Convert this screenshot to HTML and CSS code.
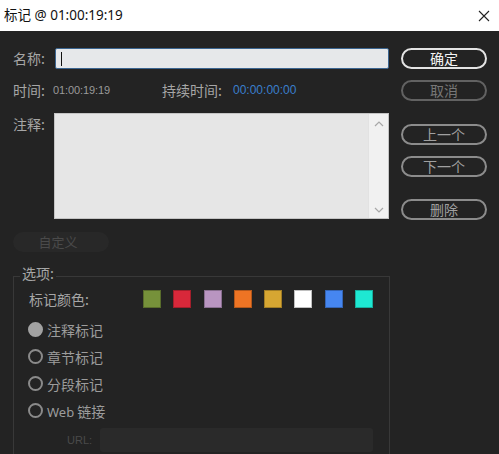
FILE: index.html
```html
<!DOCTYPE html>
<html lang="zh">
<head>
<meta charset="utf-8">
<title>标记</title>
<link rel="stylesheet" href="styles.css">
</head>
<body>
<div class="window">
  <div class="titlebar">
    <span class="title">标记 @ 01:00:19:19</span>
    <svg class="close" width="12" height="12" viewBox="0 0 12 12"><path d="M1 1L11 11M11 1L1 11"/></svg>
  </div>
  <div class="dialog">
    <div class="main">
      <div class="form">
        <div class="row name-row">
          <span class="label">名称:</span>
          <div class="input"><span class="caret"></span></div>
        </div>
        <div class="row time-row">
          <span class="label time-label">时间:</span>
          <span class="time-value">01:00:19:19</span>
          <span class="label dur-label">持续时间:</span>
          <span class="dur-value">00:00:00:00</span>
        </div>
        <div class="row notes-row">
          <span class="label notes-label">注释:</span>
          <div class="textarea">
            <div class="scrollbar">
              <svg class="arrow" width="10" height="6" viewBox="0 0 10 6"><path d="M1 5L5 1L9 5"/></svg>
              <svg class="arrow" width="10" height="6" viewBox="0 0 10 6"><path d="M1 1L5 5L9 1"/></svg>
            </div>
          </div>
        </div>
        <div class="custom-btn">自定义</div>
      </div>
      <div class="buttons">
        <div class="btn btn-ok">确定</div>
        <div class="btn btn-cancel">取消</div>
        <div class="btn btn-nav btn-prev">上一个</div>
        <div class="btn btn-nav btn-next">下一个</div>
        <div class="btn btn-nav btn-del">删除</div>
      </div>
    </div>
    <fieldset class="options">
      <legend class="legend">选项:</legend>
      <div class="color-row">
        <span class="opt-label">标记颜色:</span>
        <div class="swatches">
          <span class="swatch sw-green"></span>
          <span class="swatch sw-red"></span>
          <span class="swatch sw-lilac"></span>
          <span class="swatch sw-orange"></span>
          <span class="swatch sw-gold"></span>
          <span class="swatch sw-white"></span>
          <span class="swatch sw-blue"></span>
          <span class="swatch sw-cyan"></span>
        </div>
      </div>
      <div class="radio-row"><span class="radio checked"></span><span class="radio-text">注释标记</span></div>
      <div class="radio-row"><span class="radio"></span><span class="radio-text">章节标记</span></div>
      <div class="radio-row"><span class="radio"></span><span class="radio-text">分段标记</span></div>
      <div class="radio-row"><span class="radio"></span><span class="radio-text"><span class="latin">Web</span> 链接</span></div>
      <div class="url-row">
        <span class="url-label">URL:</span>
        <div class="url-field"></div>
      </div>
    </fieldset>
  </div>
</div>
</body>
</html>
```

FILE: styles.css
```css
* { box-sizing: border-box; }
html, body {
  margin: 0;
  padding: 0;
  width: 499px;
  height: 454px;
  overflow: hidden;
  background: #232323;
}
body {
  font-family: "Noto Sans CJK SC", "Noto Sans", sans-serif;
}
.window {
  width: 499px;
  height: 454px;
  display: flex;
  flex-direction: column;
  overflow: hidden;
}
.titlebar {
  height: 31px;
  flex: none;
  background: #ffffff;
  display: flex;
  align-items: center;
  justify-content: space-between;
  padding: 0 9px 0 4px;
}
.title {
  font-family: "Noto Sans", "Noto Sans CJK SC", sans-serif;
  font-size: 13.5px;
  color: #111;
  line-height: 20px;
  margin-top: -1px;
}
.close path {
  stroke: #222;
  stroke-width: 1.1;
  fill: none;
}
.dialog {
  flex: 1;
  min-height: 0;
  background: #232323;
  padding: 17px 10px 0 13px;
  overflow: hidden;
}
.main {
  display: flex;
}
.form {
  width: 376px;
  display: flex;
  flex-direction: column;
}
.row {
  display: flex;
}
.label {
  color: #a6a6a6;
  font-size: 14px;
  line-height: 21px;
}
.name-row {
  height: 21px;
  align-items: center;
}
.name-row .label {
  width: 42px;
}
.input {
  flex: 1;
  height: 21px;
  background: #e6e8ea;
  border: 1px solid #3b6590;
  border-radius: 2px;
  display: flex;
  align-items: center;
  padding-left: 5px;
}
.caret {
  width: 1px;
  height: 14px;
  background: #111;
}
.time-row {
  margin-top: 11px;
  height: 20px;
  align-items: center;
}
.time-label {
  width: 40px;
}
.time-value {
  font-family: "Liberation Sans", sans-serif;
  font-size: 11px;
  color: #9a9a9a;
  letter-spacing: -0.1px;
}
.dur-label {
  margin-left: 52px;
  width: 71px;
}
.dur-value {
  font-family: "Liberation Sans", sans-serif;
  font-size: 12px;
  color: #3a7fcc;
}
.notes-row {
  margin-top: 13px;
}
.notes-label {
  width: 41px;
  line-height: 20px;
  padding-top: 1px;
}
.textarea {
  flex: 1;
  height: 106px;
  background: #e6e6e6;
  border: 1px solid #c4c4c4;
  display: flex;
  justify-content: flex-end;
}
.scrollbar {
  width: 20px;
  background: #f1f1f1;
  border-left: 1px solid #e2e2e2;
  display: flex;
  flex-direction: column;
  justify-content: space-between;
  align-items: center;
  padding: 7px 0 5px;
}
.arrow path {
  stroke: #a8a8a8;
  stroke-width: 1.2;
  fill: none;
}
.custom-btn {
  margin-top: 13px;
  width: 96px;
  height: 20px;
  border-radius: 10px;
  background: #282828;
  color: #4a4a4a;
  font-size: 13px;
  line-height: 20px;
  text-align: center;
  padding-right: 6px;
}
.buttons {
  margin-left: 12px;
  width: 86px;
  display: flex;
  flex-direction: column;
}
.btn {
  height: 21px;
  border-radius: 11px;
  border: 2px solid #8c8c8c;
  color: #a0a0a0;
  font-size: 14px;
  line-height: 17px;
  text-align: center;
}
.btn-ok {
  border-color: #e4e4e4;
  color: #f4f4f4;
}
.btn-cancel {
  margin-top: 11px;
  border-color: #626262;
  color: #777;
}
.btn-prev {
  margin-top: 23px;
}
.btn-next {
  margin-top: 11px;
}
.btn-del {
  margin-top: 22px;
}
.options {
  margin: 13px 0 0 0;
  width: 377px;
  height: 189px;
  border: 1px solid #383838;
  border-bottom: none;
  padding: 0 15px;
  min-width: 0;
}
.legend {
  margin-left: -9px;
  padding: 0 2px 6px;
  font-size: 14px;
  line-height: 16px;
  color: #a6a6a6;
}
.color-row {
  margin-top: 2px;
  height: 20px;
  display: flex;
  align-items: center;
}
.opt-label {
  width: 114px;
  font-size: 14px;
  color: #a6a6a6;
}
.swatches {
  display: flex;
  gap: 12.3px;
}
.swatch {
  width: 18px;
  height: 18px;
  border: 1px solid rgba(0,0,0,0.25);
}
.sw-green { background: #76913a; }
.sw-red { background: #d8283a; }
.sw-lilac { background: #b995c1; }
.sw-orange { background: #ee7424; }
.sw-gold { background: #d6a632; }
.sw-white { background: #ffffff; }
.sw-blue { background: #4686f0; }
.sw-cyan { background: #1ee8d2; }
.radio-row {
  height: 27px;
  display: flex;
  align-items: center;
  gap: 4px;
  margin-left: -1px;
}
.color-row + .radio-row {
  margin-top: 7px;
}
.radio {
  width: 15px;
  height: 15px;
  border-radius: 50%;
  border: 2px solid #8a8a8a;
}
.radio.checked {
  background: #a2a2a2;
  border-color: #a2a2a2;
}
.radio-text {
  font-size: 14px;
  color: #9c9c9c;
}
.latin {
  font-family: "Noto Sans", sans-serif;
  font-size: 13px;
}
.url-row {
  margin-top: 4px;
  height: 24px;
  display: flex;
  align-items: center;
}
.url-label {
  width: 71px;
  padding-left: 38px;
  font-family: "Liberation Sans", sans-serif;
  font-size: 11px;
  color: #4a4a4a;
}
.url-field {
  width: 273px;
  height: 24px;
  background: #2a2a2a;
  border-radius: 3px;
}
```
